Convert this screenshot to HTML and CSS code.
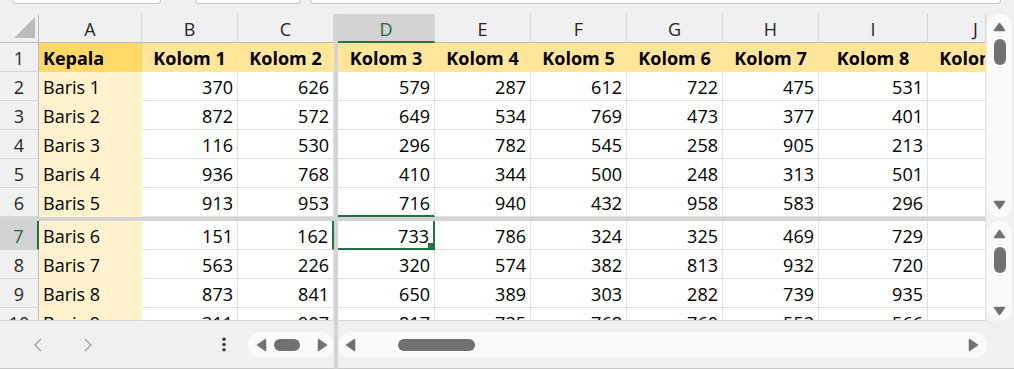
FILE: index.html
```html
<!DOCTYPE html>
<html lang="id">
<head>
    <meta charset="UTF-8">
    <meta name="viewport" content="width=device-width, initial-scale=1.0">
    <title>Lembar Kerja</title>
    <link rel="stylesheet" href="styles.css">
</head>
<body>
    <div class="topbar">
        <div class="box box-name"></div>
        <div class="box box-fn"></div>
        <div class="box box-formula"></div>
    </div>

    <div class="sheet">
        <!-- split bars and scroll bars, placed on the grid first -->
        <div class="hsplit"></div>
        <div class="vsplit"></div>
        <div class="scroll-gap"></div>

        <div class="vscroll vscroll-top">
            <svg class="varrow" width="13" height="10" viewBox="0 0 13 10"><polygon points="1.5,8.5 6.5,1.5 11.5,8.5"/></svg>
            <div class="vthumb"></div>
            <div class="spacer"></div>
            <svg class="varrow" width="13" height="10" viewBox="0 0 13 10"><polygon points="1.5,1.5 6.5,8.5 11.5,1.5"/></svg>
        </div>
        <div class="vscroll vscroll-bottom">
            <svg class="varrow" width="13" height="10" viewBox="0 0 13 10"><polygon points="1.5,8.5 6.5,1.5 11.5,8.5"/></svg>
            <div class="vthumb vthumb-low"></div>
            <div class="spacer"></div>
            <svg class="varrow" width="13" height="10" viewBox="0 0 13 10"><polygon points="1.5,1.5 6.5,8.5 11.5,1.5"/></svg>
        </div>

        <div class="foot foot-left">
            <svg class="chev chev-prev" width="10" height="14" viewBox="0 0 10 14"><polyline points="8,1 2,7 8,13"/></svg>
            <svg class="chev chev-next" width="10" height="14" viewBox="0 0 10 14"><polyline points="2,1 8,7 2,13"/></svg>
            <svg class="more" width="4" height="15" viewBox="0 0 4 15"><circle cx="2" cy="2.2" r="1.8"/><circle cx="2" cy="7.5" r="1.8"/><circle cx="2" cy="12.8" r="1.8"/></svg>
            <div class="hpill hpill-mini">
                <svg class="harrow" width="11" height="14" viewBox="0 0 11 14"><polygon points="9.5,1.5 1.5,7 9.5,12.5"/></svg>
                <div class="hthumb hthumb-mini"></div>
                <svg class="harrow harrow-mini-right" width="11" height="14" viewBox="0 0 11 14"><polygon points="1.5,1.5 9.5,7 1.5,12.5"/></svg>
            </div>
        </div>
        <div class="foot foot-right">
            <div class="hpill hpill-main">
                <svg class="harrow" width="11" height="14" viewBox="0 0 11 14"><polygon points="9.5,1.5 1.5,7 9.5,12.5"/></svg>
                <div class="hthumb hthumb-main"></div>
                <div class="spacer"></div>
                <svg class="harrow" width="11" height="14" viewBox="0 0 11 14"><polygon points="1.5,1.5 9.5,7 1.5,12.5"/></svg>
            </div>
        </div>

        <!-- column headers -->
        <div class="row">
            <div class="corner"><svg width="21" height="21" viewBox="0 0 21 21"><polygon points="0,21 21,21 21,0"/></svg></div>
            <div class="ch">A</div>
            <div class="ch">B</div>
            <div class="ch">C</div>
            <div class="ch sel">D</div>
            <div class="ch">E</div>
            <div class="ch">F</div>
            <div class="ch">G</div>
            <div class="ch">H</div>
            <div class="ch">I</div>
            <div class="ch clip"><span>J</span></div>
        </div>

        <div class="row">
            <div class="rh">1</div>
            <div class="hd key">Kepala</div>
            <div class="hd">Kolom 1</div>
            <div class="hd">Kolom 2</div>
            <div class="hd">Kolom 3</div>
            <div class="hd">Kolom 4</div>
            <div class="hd">Kolom 5</div>
            <div class="hd">Kolom 6</div>
            <div class="hd">Kolom 7</div>
            <div class="hd">Kolom 8</div>
            <div class="hd clip"><span>Kolom 9</span></div>
        </div>

        <div class="row">
            <div class="rh">2</div>
            <div class="lbl">Baris 1</div>
            <div class="c">370</div><div class="c">626</div>
            <div class="c">579</div><div class="c">287</div><div class="c">612</div>
            <div class="c">722</div><div class="c">475</div><div class="c">531</div>
            <div class="c"></div>
        </div>

        <div class="row">
            <div class="rh">3</div>
            <div class="lbl">Baris 2</div>
            <div class="c">872</div><div class="c">572</div>
            <div class="c">649</div><div class="c">534</div><div class="c">769</div>
            <div class="c">473</div><div class="c">377</div><div class="c">401</div>
            <div class="c"></div>
        </div>

        <div class="row">
            <div class="rh">4</div>
            <div class="lbl">Baris 3</div>
            <div class="c">116</div><div class="c">530</div>
            <div class="c">296</div><div class="c">782</div><div class="c">545</div>
            <div class="c">258</div><div class="c">905</div><div class="c">213</div>
            <div class="c"></div>
        </div>

        <div class="row">
            <div class="rh">5</div>
            <div class="lbl">Baris 4</div>
            <div class="c">936</div><div class="c">768</div>
            <div class="c">410</div><div class="c">344</div><div class="c">500</div>
            <div class="c">248</div><div class="c">313</div><div class="c">501</div>
            <div class="c"></div>
        </div>

        <div class="row">
            <div class="rh">6</div>
            <div class="lbl">Baris 5</div>
            <div class="c">913</div><div class="c">953</div>
            <div class="c sel-top">716</div><div class="c">940</div><div class="c">432</div>
            <div class="c">958</div><div class="c">583</div><div class="c">296</div>
            <div class="c"></div>
        </div>

        <div class="row">
            <div class="rh sel">7</div>
            <div class="lbl">Baris 6</div>
            <div class="c">151</div><div class="c sel-left">162</div>
            <div class="c active">733</div><div class="c">786</div><div class="c">324</div>
            <div class="c">325</div><div class="c">469</div><div class="c">729</div>
            <div class="c"></div>
        </div>

        <div class="row">
            <div class="rh">8</div>
            <div class="lbl">Baris 7</div>
            <div class="c">563</div><div class="c">226</div>
            <div class="c">320</div><div class="c">574</div><div class="c">382</div>
            <div class="c">813</div><div class="c">932</div><div class="c">720</div>
            <div class="c"></div>
        </div>

        <div class="row">
            <div class="rh">9</div>
            <div class="lbl">Baris 8</div>
            <div class="c">873</div><div class="c">841</div>
            <div class="c">650</div><div class="c">389</div><div class="c">303</div>
            <div class="c">282</div><div class="c">739</div><div class="c">935</div>
            <div class="c"></div>
        </div>

        <div class="row last">
            <div class="rh">10</div>
            <div class="lbl">Baris 9</div>
            <div class="c">311</div><div class="c">907</div>
            <div class="c">817</div><div class="c">735</div><div class="c">768</div>
            <div class="c">760</div><div class="c">553</div><div class="c">566</div>
            <div class="c"></div>
        </div>
    </div>
</body>
</html>
```

FILE: styles.css
```css
body {
    margin: 0;
    width: 1014px;
    height: 369px;
    overflow: hidden;
    background: #f0f0f0;
    font-family: 'Open Sans', 'Liberation Sans', sans-serif;
    font-size: 18px;
    color: #000;
}

/* bottom edges of name box / formula bar */
.topbar {
    height: 14px;
    display: flex;
    align-items: flex-start;
}
.box {
    height: 3px;
    background: #fff;
    border: 1px solid #c4c4c4;
    border-top: 0;
    border-radius: 0 0 6px 6px;
}
.box-name {
    margin-left: 12px;
    width: 147px;
}
.box-fn {
    margin-left: 34px;
    width: 104px;
}
.box-formula {
    margin-left: 9px;
    width: 689px;
}

.sheet {
    display: grid;
    grid-template-columns: 39px 103px 96px 96px 4px 97px 96px 96px 96px 96px 109px 58px 28px;
    grid-template-rows: repeat(7, 29px) 4px repeat(3, 29px) 13px 48px;
    background: #f0f0f0;
}
.row {
    display: contents;
}

.corner,
.ch,
.rh,
.hd,
.lbl,
.c {
    box-sizing: border-box;
    overflow: hidden;
    white-space: nowrap;
    line-height: 28px;
    padding-top: 1px;
}

.corner {
    background: #f0f0f0;
    border-right: 1px solid #bdbdbd;
    border-bottom: 1px solid #bdbdbd;
    display: flex;
    justify-content: flex-end;
    align-items: flex-end;
    padding: 0 3px 4px 0;
}
.corner polygon {
    fill: #bcbcbc;
}

.ch {
    background: #f0f0f0;
    border-right: 1px solid #d6d6d6;
    border-bottom: 1px solid #bdbdbd;
    text-align: center;
    color: #262626;
}
.ch.sel {
    background: #d3d3d3;
    color: #1d6a40;
    border-bottom: 2px solid #217346;
}

.rh {
    background: #f0f0f0;
    border-right: 1px solid #bdbdbd;
    border-bottom: 1px solid #d6d6d6;
    text-align: center;
    color: #262626;
}
.rh.sel {
    background: #d3d3d3;
    color: #1d6a40;
    border-right: 2px solid #217346;
}

.hd {
    background: #ffe699;
    border-right: 1px solid #ffe699;
    border-bottom: 1px solid #ffe699;
    font-weight: bold;
    text-align: center;
}
.hd.key {
    background: #ffd966;
    border-color: #ffd966;
    text-align: left;
    padding-left: 4px;
}

.lbl {
    background: #fff2cc;
    border-right: 1px solid #fff2cc;
    border-bottom: 1px solid #fff2cc;
    padding-left: 4px;
}

.c {
    background: #fff;
    border-right: 1px solid #e1e1e1;
    border-bottom: 1px solid #e1e1e1;
    text-align: right;
    padding-right: 4px;
}

/* partially visible column J */
.clip span {
    display: block;
    width: 95px;
    text-align: center;
}

.last > div {
    border-bottom-color: #d6d6d6;
}

/* selection around D7 */
.c.sel-top {
    border-bottom: 2px solid #217346;
}
.c.sel-left {
    border-right: 2px solid #217346;
}
.c.active {
    border-right: 2px solid #217346;
    border-bottom: 2px solid #217346;
    position: relative;
    overflow: visible;
}
.c.active::after {
    content: "";
    position: absolute;
    right: -2px;
    bottom: -2px;
    width: 7px;
    height: 7px;
    background: #217346;
}

.hsplit {
    grid-row: 8;
    grid-column: 1 / 13;
    background: #d4d4d4;
}
.vsplit {
    grid-row: 1 / -1;
    grid-column: 5;
    background: #d4d4d4;
}
.scroll-gap {
    grid-row: 8;
    grid-column: 13;
}

.vscroll {
    grid-column: 13;
    margin: 0 2px 0 1px;
    background: #fafafa;
    border-radius: 12px;
    display: flex;
    flex-direction: column;
    align-items: center;
}
.vscroll-top {
    grid-row: 1 / 8;
    padding: 8px 0 7px;
}
.vscroll-bottom {
    grid-row: 9 / 13;
    padding: 8px 0 5px;
}
.vthumb {
    width: 12px;
    height: 26px;
    margin-top: 7px;
    border-radius: 6px;
    background: #717171;
}
.vthumb-low {
    margin-top: 8px;
}
.spacer {
    flex: 1;
}
.varrow polygon,
.harrow polygon {
    fill: #717171;
    stroke: #717171;
    stroke-width: 1.5;
    stroke-linejoin: round;
}

.foot {
    grid-row: 13;
    background: #f0f0f0;
    border-bottom: 1px solid #c8c8c8;
    display: flex;
    align-items: center;
    height: 47px;
}
.foot-left {
    grid-column: 1 / 5;
}
.foot-right {
    grid-column: 6 / 14;
}

.chev polyline {
    fill: none;
    stroke: #a3a3a3;
    stroke-width: 1.4;
}
.chev-prev {
    margin-left: 33px;
}
.chev-next {
    margin-left: 40px;
}
.more {
    margin-left: 129px;
}
.more circle {
    fill: #3f3f3f;
}

.hpill {
    height: 26px;
    border-radius: 13px;
    background: #fafafa;
    display: flex;
    align-items: center;
    box-sizing: border-box;
}
.hpill-mini {
    width: 86px;
    margin-left: 22px;
    padding-left: 8px;
}
.hpill-main {
    width: 649px;
    padding: 0 8px 0 7px;
}
.hthumb {
    height: 12px;
    border-radius: 6px;
    background: #717171;
}
.hthumb-mini {
    width: 26px;
    margin-left: 7px;
}
.harrow-mini-right {
    margin-left: 17px;
}
.hthumb-main {
    width: 77px;
    margin-left: 42px;
}
```
